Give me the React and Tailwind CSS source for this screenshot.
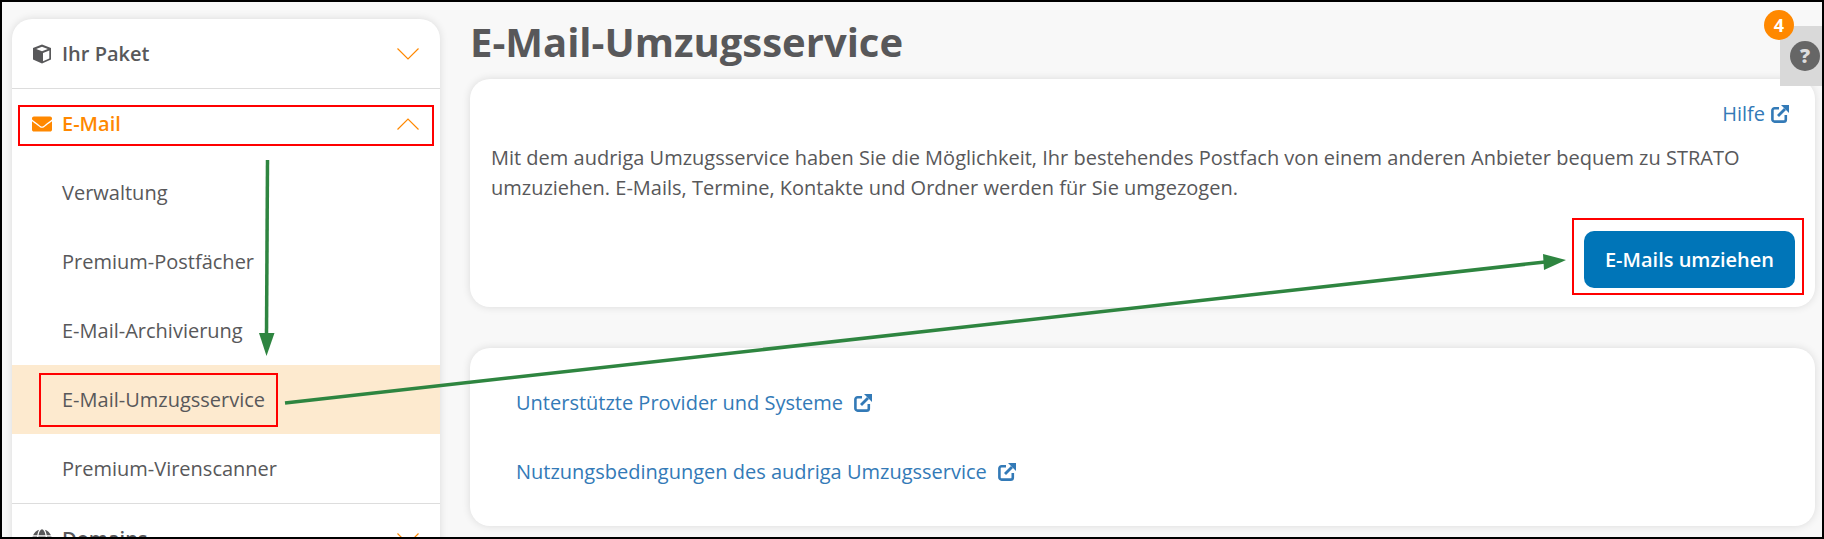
import React from "react";
import { FaEnvelope, FaGlobe } from "react-icons/fa";

function Chevron({ up }) {
    return (
        <svg width="22" height="12" viewBox="0 0 22 12" fill="none" stroke="#ff8800" strokeWidth="1.2">
            <polyline points={up ? "0.5,11.5 11,1 21.5,11.5" : "0.5,0.5 11,11 21.5,0.5"} />
        </svg>
    );
}

function CubeIcon() {
    return (
        <svg width="20" height="20" viewBox="0 0 20 20">
            <polygon points="10,0.5 19,4 19,15.5 10,19.5 1,15.5 1,4" fill="#58585a" />
            <polygon points="10,2.8 15.8,5 10,7.2 4.2,5" fill="#ffffff" />
            <polygon points="11,9 17.3,6.6 17.3,14.4 11,17.2" fill="#ffffff" />
        </svg>
    );
}

function ExternalIcon() {
    return (
        <svg width="18" height="18" viewBox="0 0 18 18" fill="none" stroke="#337ab7" className="shrink-0">
            <path d="M8 3.2H3.6a2.2 2.2 0 0 0-2.2 2.2v9a2.2 2.2 0 0 0 2.2 2.2h9a2.2 2.2 0 0 0 2.2-2.2V10" strokeWidth="2.6" />
            <path d="M7 11L14 4" strokeWidth="2.8" />
            <polygon points="10,0 18,0 18,8" fill="#337ab7" stroke="none" />
        </svg>
    );
}

function SectionRow({ icon, label, open, active }) {
    return (
        <div className={`flex h-[69px] items-center pl-[20px] pr-[21px] ${active ? "text-[#ff8800]" : "text-[#58585a]"}`}>
            <span className="flex w-[30px] text-[20px]">{icon}</span>
            <span className="flex-1 text-[20px] font-semibold">{label}</span>
            <Chevron up={open} />
        </div>
    );
}

function SubItem({ label, active }) {
    return (
        <div className={`flex h-[69px] items-center pl-[50px] text-[20px] text-[#58585a] ${active ? "bg-[#fdeacf]" : ""}`}>
            {label}
        </div>
    );
}

function ExtLink({ label, gap }) {
    return (
        <a className={`flex items-center text-[20px] text-[#337ab7] ${gap}`}>
            {label}
            <ExternalIcon />
        </a>
    );
}

export default function App() {
    const subItems = ["Verwaltung", "Premium-Postfächer", "E-Mail-Archivierung", "E-Mail-Umzugsservice", "Premium-Virenscanner"];

    return (
        <div className="relative h-[539px] w-[1824px] overflow-hidden border-2 border-black bg-[#f8f8f8] font-['Open_Sans',sans-serif]">
            <div className="flex items-start">
                {/* Seitenleiste */}
                <aside className="ml-[10px] mt-[17px] w-[428px] shrink-0 rounded-t-[20px] bg-white shadow-[0_0_8px_rgba(0,0,0,0.12)]">
                    <div className="border-b border-[#dddddd]">
                        <SectionRow icon={<CubeIcon />} label="Ihr Paket" />
                    </div>
                    <div className="border-b border-[#dddddd]">
                        <SectionRow icon={<FaEnvelope />} label="E-Mail" open active />
                        {subItems.map((item) => (
                            <SubItem key={item} label={item} active={item === "E-Mail-Umzugsservice"} />
                        ))}
                    </div>
                    <SectionRow icon={<FaGlobe />} label="Domains" />
                </aside>

                {/* Inhalt */}
                <main className="ml-[30px] w-[1345px] shrink-0">
                    <h1 className="mt-[14px] h-[63px] text-[40px] leading-[52px] font-bold text-[#58585a]">E-Mail-Umzugsservice</h1>
                    <section className="flex h-[228px] flex-col rounded-[20px] bg-white pl-[21px] pr-[20px] pt-[20px] shadow-[0_0_8px_rgba(0,0,0,0.12)]">
                        <div className="flex justify-end pr-[6px]">
                            <ExtLink label="Hilfe" gap="gap-[6px]" />
                        </div>
                        <p className="mt-[14px] text-[20px] leading-[30px] text-[#58585a]">
                            Mit dem audriga Umzugsservice haben Sie die Möglichkeit, Ihr bestehendes Postfach von einem anderen Anbieter bequem zu STRATO
                            <br />
                            umzuziehen. E-Mails, Termine, Kontakte und Ordner werden für Sie umgezogen.
                        </p>
                        <div className="flex justify-end pt-[28px]">
                            <button className="h-[57px] w-[211px] rounded-[10px] bg-[#0075b8] text-[20px] font-semibold text-white">E-Mails umziehen</button>
                        </div>
                    </section>
                    <section className="mt-[41px] flex h-[178px] flex-col rounded-[20px] bg-white pl-[46px] pt-[20px] shadow-[0_0_8px_rgba(0,0,0,0.12)]">
                        <div className="flex h-[69px] items-center">
                            <ExtLink label="Unterstützte Provider und Systeme" gap="gap-[11px]" />
                        </div>
                        <div className="flex h-[69px] items-center">
                            <ExtLink label="Nutzungsbedingungen des audriga Umzugsservice" gap="gap-[11px]" />
                        </div>
                    </section>
                </main>
            </div>

            {/* Hilfe-Tab und Badge */}
            <div className="absolute left-[1778px] top-[24px] flex h-[60px] w-[42px] items-center justify-end bg-[#d9d9d9] pr-[2px]">
                <div className="flex h-[30px] w-[30px] items-center justify-center rounded-full bg-[#666666] text-[20px] font-extrabold text-[#dddddd]">?</div>
            </div>
            <div className="absolute left-[1762px] top-[8px] flex h-[30px] w-[30px] items-center justify-center rounded-full bg-[#ff8800] text-[18px] font-bold text-white">4</div>

            {/* Markierungen */}
            <div className="absolute left-[16px] top-[103px] h-[41px] w-[416px] border-2 border-[#ff0000]" />
            <div className="absolute left-[37px] top-[371px] h-[54px] w-[239px] border-2 border-[#ff0000]" />
            <div className="absolute left-[1570px] top-[216px] h-[77px] w-[232px] border-2 border-[#ff0000]" />
            <svg className="absolute left-[-2px] top-[-2px]" width="1824" height="539" fill="#2e8540" stroke="none">
                <line x1="267.5" y1="160" x2="266.5" y2="335" stroke="#2e8540" strokeWidth="3.5" />
                <polygon points="259,333 274.5,333 266.5,356" />
                <line x1="285" y1="403" x2="1545" y2="262" stroke="#2e8540" strokeWidth="3.5" />
                <polygon points="1543,254 1566,260 1544,270" />
            </svg>
        </div>
    );
}
